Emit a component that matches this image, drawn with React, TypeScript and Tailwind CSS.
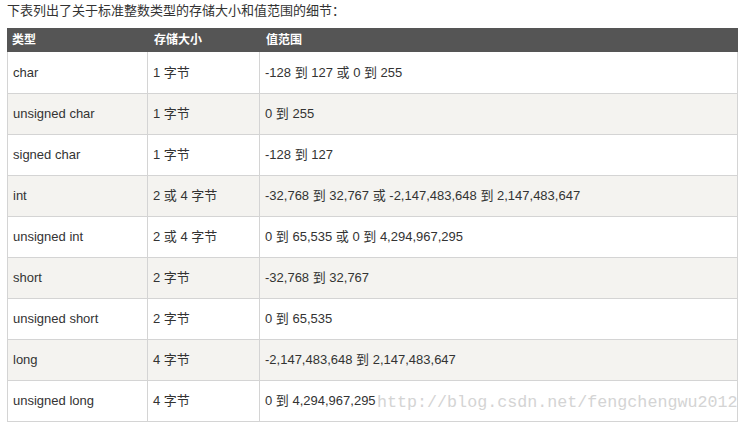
import React from "react";

const rows: [string, string, string][] = [
  ["char", "1 字节", "-128 到 127 或 0 到 255"],
  ["unsigned char", "1 字节", "0 到 255"],
  ["signed char", "1 字节", "-128 到 127"],
  ["int", "2 或 4 字节", "-32,768 到 32,767 或 -2,147,483,648 到 2,147,483,647"],
  ["unsigned int", "2 或 4 字节", "0 到 65,535 或 0 到 4,294,967,295"],
  ["short", "2 字节", "-32,768 到 32,767"],
  ["unsigned short", "2 字节", "0 到 65,535"],
  ["long", "4 字节", "-2,147,483,648 到 2,147,483,647"],
  ["unsigned long", "4 字节", "0 到 4,294,967,295"],
];

export default function App() {
  return (
    <div
      className="relative w-[747px] h-[427px] bg-white text-[#333]"
      style={{ fontFamily: '"Liberation Sans", Arial, "Noto Sans CJK SC", sans-serif' }}
    >
      <div className="pl-[7px] pt-[2px] h-[28px] text-[13px] leading-[18px] text-[#333]">
        下表列出了关于标准整数类型的存储大小和值范围的细节：
      </div>
      <div className="ml-[7px] w-[731px]">
        <div className="flex h-[24px] bg-[#555555] text-white text-[12px] font-bold items-center">
          <div className="w-[141px] pl-[5px]">类型</div>
          <div className="w-[112px] pl-[6px]">存储大小</div>
          <div className="flex-1 pl-[6px]">值范围</div>
        </div>
        <div className="border-l border-r border-b border-[#d4d4d4]">
          {rows.map((r, i) => (
            <div
              key={i}
              className={`flex h-[41px] items-center text-[13px] ${
                i % 2 === 1 ? "bg-[#f4f3f0]" : "bg-white"
              } ${i > 0 ? "border-t border-[#d4d4d4]" : ""}`}
            >
              <div className="w-[140px] h-full flex items-center pl-[5px] border-r border-[#d4d4d4]">{r[0]}</div>
              <div className="w-[112px] h-full flex items-center pl-[5px] border-r border-[#d4d4d4]">{r[1]}</div>
              <div className="flex-1 h-full flex items-center pl-[5px]">{r[2]}</div>
            </div>
          ))}
        </div>
      </div>
      <div
        className="absolute left-[377px] top-[393px] text-[16.7px] leading-[20px] text-[#d4d4d4]"
        style={{ fontFamily: '"Liberation Mono", "DejaVu Sans Mono", monospace' }}
      >
        http://blog.csdn.net/fengchengwu2012
      </div>
    </div>
  );
}
